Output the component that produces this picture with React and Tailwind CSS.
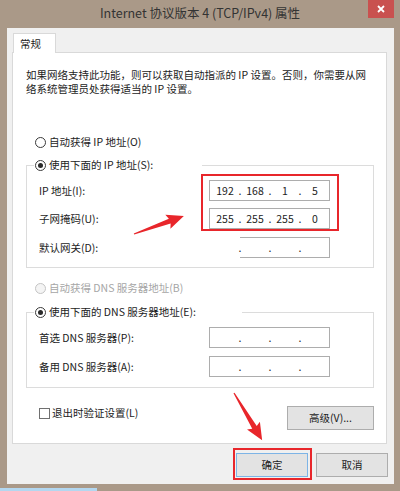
import React from "react";

const Radio = ({ checked, disabled }) => (
  <span
    className={`w-[11px] h-[11px] rounded-full border flex items-center justify-center shrink-0 ${
      disabled ? "border-[#c4c4c4] bg-[#f4f4f4]" : "border-[#3a3a3a] bg-white"
    }`}
  >
    {checked && <span className="w-[5px] h-[5px] rounded-full bg-[#2a2a2a]"></span>}
  </span>
);

const RadioRow = ({ label, checked, disabled, className = "" }) => (
  <div className={`h-[14px] flex items-center ${className}`}>
    <Radio checked={checked} disabled={disabled} />
    <span className={`ml-[3px] whitespace-nowrap ${disabled ? "text-[#a6a6a6]" : ""}`}>{label}</span>
  </div>
);

// ip address box, 4 segments separated by dots
const IpBox = ({ parts = ["", "", "", ""], clipped }) => {
  const cells = [];
  parts.forEach((p, i) => {
    cells.push(
      <span key={"p" + i} className="w-[22px] text-center">
        {p}
      </span>
    );
    if (i < 3)
      cells.push(
        <span key={"d" + i} className="w-[8px] text-center">
          .
        </span>
      );
  });

  if (clipped) {
    return (
      <div className="w-[121px] h-[21px]">
        <div className="ml-[31px] w-[90px] h-[21px] border-y border-r border-[#adadad] bg-white flex items-center">
          <div className="-ml-[26px] flex items-center">{cells}</div>
        </div>
      </div>
    );
  }
  return (
    <div className="w-[121px] h-[21px] border border-[#adadad] bg-white flex items-center pl-[4px]">
      {cells}
    </div>
  );
};

const FieldRow = ({ label, children, className = "" }) => (
  <div className={`flex items-center h-[21px] pl-[12px] ${className}`}>
    <span className="w-[170px] whitespace-nowrap">{label}</span>
    {children}
  </div>
);

const Button = ({ children, primary, className = "" }) => (
  <div
    className={`h-[24px] flex items-center justify-center bg-[#e3e3e3] border ${
      primary ? "border-[#7db4e6]" : "border-[#adadad]"
    } ${className}`}
  >
    {children}
  </div>
);

const Arrow = ({ x, y, len, angle }) => (
  <g transform={`translate(${x} ${y}) rotate(${angle})`}>
    <polygon
      points={`0,-0.6 ${len - 15},-2.6 ${len - 17},-7.5 ${len},0 ${len - 17},7.5 ${len - 15},2.6 0,0.6`}
      fill="#e8262b"
    />
  </g>
);

export default function App() {
  return (
    <div className="w-[400px] h-[491px] bg-[#aa9988] relative overflow-hidden font-['Noto_Sans_CJK_SC',sans-serif] text-[10.5px] text-[#1c1c1c] leading-[14px]">
      {/* title bar */}
      <div className="h-[28px] flex items-center justify-center relative">
        <span className="text-[12.5px] text-[#333] pb-[2px]">Internet 协议版本 4 (TCP/IPv4) 属性</span>
        <div className="absolute right-[6px] top-0 w-[26px] h-[18px] bg-[#c9514f] flex items-center justify-center">
          <svg width="8" height="8" viewBox="0 0 8 8">
            <path d="M1 1 L7 7 M7 1 L1 7" stroke="#fff" strokeWidth="1.8" />
          </svg>
        </div>
      </div>

      {/* client area */}
      <div className="ml-[7px] w-[387px] h-[456px] bg-[#f0f0f0] pt-[5px]">
        <div className="ml-[6px] w-[43px] h-[20px] bg-white border-t border-x border-[#d9d9d9] relative z-10 pl-[6px] flex items-center">
          常规
        </div>
        <div className="ml-[5px] -mt-px w-[375px] h-[392px] bg-white border border-[#d9d9d9] pl-[13px] pt-[15px]">
          <p className="whitespace-nowrap">
            如果网络支持此功能，则可以获取自动指派的 IP 设置。否则，你需要从网
            <br />
            络系统管理员处获得适当的 IP 设置。
          </p>

          <RadioRow className="mt-[39px] ml-[9px]" label="自动获得 IP 地址(O)" />

          <div className="mt-[16px] w-[348px] border border-[#dcdcdc] pb-[9px]">
            <div className="-mt-[9px] h-[16px] ml-[7px] w-[168px] bg-white pl-[1px] flex items-center">
              <RadioRow checked label="使用下面的 IP 地址(S):" />
            </div>
            <FieldRow label="IP 地址(I):" className="mt-[7px]">
              <IpBox parts={["192", "168", "1", "5"]} />
            </FieldRow>
            <FieldRow label="子网掩码(U):" className="mt-[7px]">
              <IpBox parts={["255", "255", "255", "0"]} />
            </FieldRow>
            <FieldRow label="默认网关(D):" className="mt-[8px]">
              <IpBox clipped />
            </FieldRow>
          </div>

          <RadioRow className="mt-[13px] ml-[9px]" disabled label="自动获得 DNS 服务器地址(B)" />

          <div className="mt-[17px] w-[348px] border border-[#dcdcdc] pb-[10px]">
            <div className="-mt-[9px] h-[16px] ml-[7px] w-[208px] bg-white pl-[1px] flex items-center">
              <RadioRow checked label="使用下面的 DNS 服务器地址(E):" />
            </div>
            <FieldRow label="首选 DNS 服务器(P):" className="mt-[7px]">
              <IpBox />
            </FieldRow>
            <FieldRow label="备用 DNS 服务器(A):" className="mt-[8px]">
              <IpBox />
            </FieldRow>
          </div>

          <div className="mt-[18px] w-[348px] flex items-start justify-between">
            <div className="ml-[13px] h-[14px] flex items-center">
              <span className="w-[11px] h-[11px] border border-[#707070] bg-white"></span>
              <span className="ml-[2px]">退出时验证设置(L)</span>
            </div>
            <Button className="w-[87px] h-[23px]">高级(V)...</Button>
          </div>
        </div>

        <div className="mt-[9px] flex justify-end gap-[8px] pr-[6px]">
          <Button primary className="w-[72px]">
            确定
          </Button>
          <Button className="w-[72px]">取消</Button>
        </div>
      </div>

      <div className="mt-[4px] w-[97px] h-[3px] bg-[#b3d7f0]"></div>

      {/* annotations */}
      <div className="absolute left-[201px] top-[174px] w-[138px] h-[57px] border-2 border-[#e8262b]"></div>
      <div className="absolute left-[233px] top-[448px] w-[79px] h-[32px] border-2 border-[#e8262b]"></div>
      <svg className="absolute inset-0 pointer-events-none" width="400" height="491">
        <Arrow x={134} y={234} len={53} angle={-19.8} />
        <Arrow x={234} y={393} len={55} angle={59.2} />
      </svg>
    </div>
  );
}
